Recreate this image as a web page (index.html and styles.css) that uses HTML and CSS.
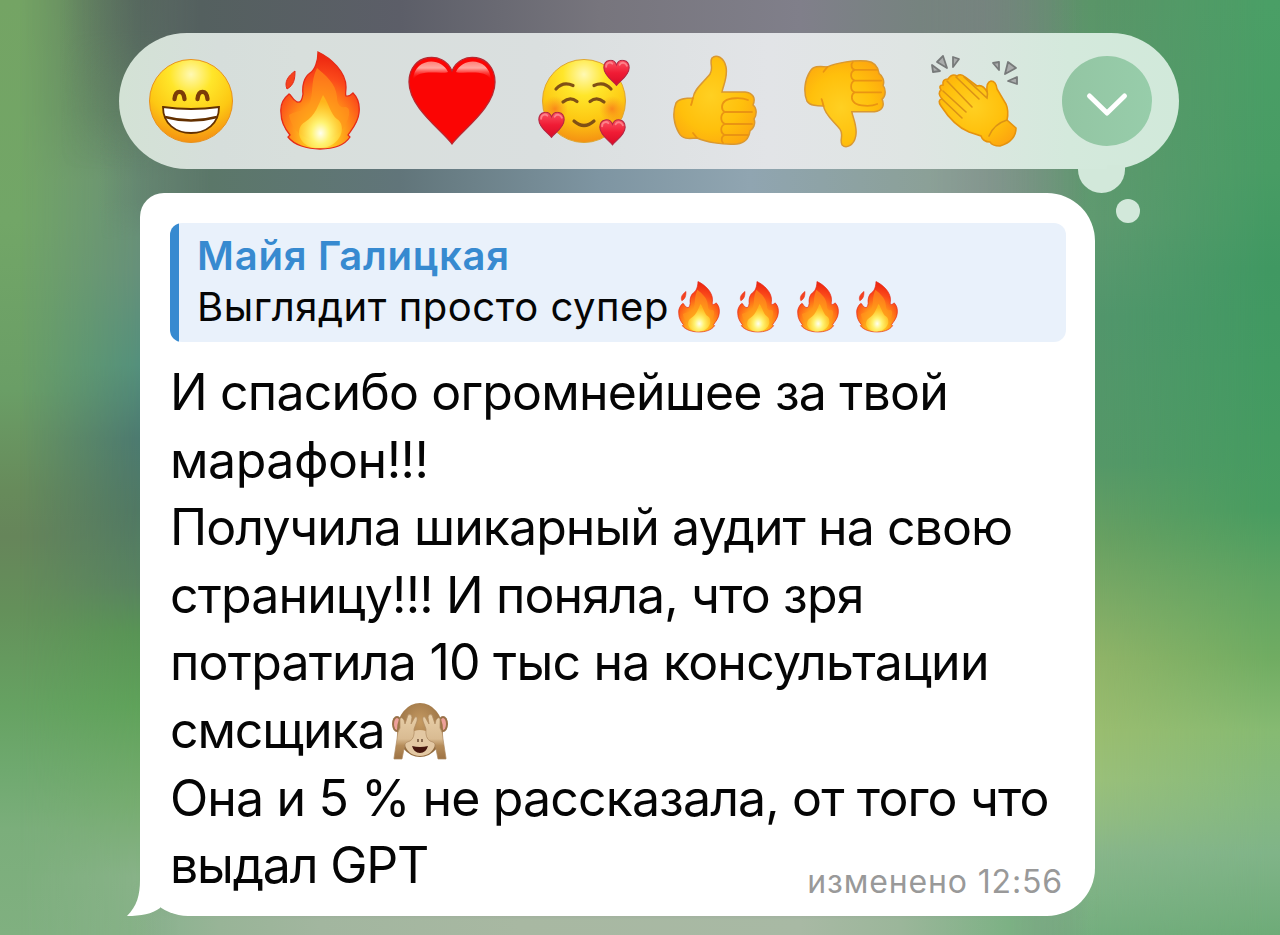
FILE: index.html
```html
<!DOCTYPE html>
<html lang="ru">
<head>
<meta charset="utf-8">
<title>Сообщение</title>
<link rel="stylesheet" href="styles.css">
</head>
<body>
<svg class="defs" aria-hidden="true">
  <defs>
    <radialGradient id="face" cx=".5" cy=".18" r=".85"><stop offset="0" stop-color="#fff9b4"/><stop offset=".3" stop-color="#ffe62a"/><stop offset=".65" stop-color="#fdc813"/><stop offset="1" stop-color="#f48a12"/></radialGradient>
    <radialGradient id="flame" cx=".5" cy=".86" r=".8"><stop offset="0" stop-color="#fff7a0"/><stop offset=".25" stop-color="#ffc21c"/><stop offset=".5" stop-color="#ff8518"/><stop offset=".75" stop-color="#fb4a1a"/><stop offset="1" stop-color="#ee2a12"/></radialGradient>
    <radialGradient id="core" cx=".5" cy=".72" r=".6"><stop offset="0" stop-color="#fffff0"/><stop offset=".35" stop-color="#fff372"/><stop offset="1" stop-color="#ffc81c" stop-opacity=".6"/></radialGradient>
    <linearGradient id="shine" x1="0" y1="0" x2="0" y2="1"><stop offset="0" stop-color="#ff8078"/><stop offset=".35" stop-color="#ffa8a0"/><stop offset="1" stop-color="#ff0a0a" stop-opacity="0"/></linearGradient>
    <linearGradient id="smallHeart" x1="0" y1="0" x2="0" y2="1"><stop offset="0" stop-color="#fb5262"/><stop offset=".5" stop-color="#f01c35"/><stop offset="1" stop-color="#d90b28"/></linearGradient>
    <radialGradient id="blush"><stop offset="0" stop-color="#f8641e" stop-opacity=".65"/><stop offset="1" stop-color="#f8841e" stop-opacity="0"/></radialGradient>
    <radialGradient id="hand" cx=".45" cy=".45" r=".65"><stop offset="0" stop-color="#ffd022"/><stop offset=".6" stop-color="#ffc00c"/><stop offset="1" stop-color="#fda60f"/></radialGradient>
    <radialGradient id="fur" cx=".5" cy=".35" r=".65"><stop offset="0" stop-color="#c59a62"/><stop offset="1" stop-color="#8f683c"/></radialGradient>
    <linearGradient id="paw" x1="0" y1="0" x2="0" y2="1"><stop offset="0" stop-color="#e8cfa8"/><stop offset=".55" stop-color="#d9bb92"/><stop offset=".7" stop-color="#b68d5a"/><stop offset="1" stop-color="#9d7243"/></linearGradient>
    <symbol id="heart" viewBox="0 0 26 26"><path d="M13 25C10 21 .8 15.500 .8 8C.8 -.5 10.500 -1.500 13 5.200C15.500 -1.500 25.200 -.5 25.200 8C25.200 15.500 16 21 13 25Z" fill="url(#smallHeart)" stroke="#b32743"/><path d="M3 7C3 3 7 2 9 4M16 5C18 2 22 3 23 6" fill="none" stroke="#ff9aa0" stroke-width="1.800" stroke-linecap="round" opacity=".7"/></symbol>
    <symbol id="fire" viewBox="0 0 80 100"><path d="M38 1C51 7 66 21 66 36C66 40 65 43 66 45C69 46 72 43 73 42C78 47 80 54 79 62C78 72 72 78 68 84L70 86C64 95 51 98 40 98C27 98 14 94 8 86L10 84C5 78 1 71 1 62C0 54 4 47 9 43C11 43 12 49 17 51C21 52 22 49 23 43C22 35 24 26 30 22C35 19 38 10 38 1Z" fill="url(#flame)" stroke="#e52a17" stroke-width="1.300"/><path d="M37 17C45 24 56 32 57 46C57 52 59 57 65 56C68 56 70 58 69 64C67 76 55 90 40 90C23 90 11 77 9 64C14 60 25 61 29 53C34 44 30 31 37 17Z" fill="#ff981b" opacity=".6"/><path d="M43 44C49 53 51 64 57 68C67 74 62 96 40 97C18 98 14 77 25 71C36 64 38 54 43 44Z" fill="url(#core)"/><path d="M15 20C8 25 4 31 7 38C14 34 15 28 15 20Z" fill="#f5431e" stroke="#e52a17"/></symbol>
    <symbol id="thumb" viewBox="0 0 84 92"><path d="M39 3C43 -1 51 2 53 12C55 22 50 31 49 37L72 37C80 38 83 43 80 50C84 53 84 60 81 64C83 69 80 74 77 76C76 83 73 88 64 89C49 90 33 87 24 83C15 84 9 84 6 78C1 70 -1 58 3 48C6 43 14 43 20 43C21 34 31 27 37 19C41 13 36 8 39 3Z" fill="url(#hand)" stroke="#d99832" stroke-width="1.500"/><path d="M75 45C68 42 56 43 52 46C48 49 48 55 52 57H79M52 57C47 59 47 67 52 69H79M52 69C47 71 47 78 52 80H75M52 80C48 81 48 86 50 88M20 43C19 46 19 48 18 50M20 78L24 83" fill="none" stroke="#ea9412" stroke-width="1.800" stroke-linecap="round"/></symbol>
  </defs>
</svg>
<main class="stage">
  <div class="backdrop" aria-hidden="true"><i class="wash inner-left"></i><i class="wash middle"></i><i class="wash right-near"></i><i class="wash right-far"></i><i class="wash upper"></i><i class="wash gap"></i><i class="wash lower"></i></div>
  <div class="reactions">
    <svg class="emoji" viewBox="0 0 92 100"><circle cx="46" cy="50" r="41.500" fill="url(#face)" stroke="#e9921b"/><path d="M29.500 48C30.500 38.500 38.500 38.500 39.500 48M52.500 48C53.500 38.500 61.500 38.500 62.500 48" fill="none" stroke="#7c3d08" stroke-width="4.300" stroke-linecap="round"/><path d="M18 56Q46 60 74 56C74 73 61 82 46 82C31 82 18 73 18 56Z" fill="#fff" stroke="#633000" stroke-width="1.800"/><path d="M20 66Q46 73 72 66" fill="none" stroke="#633000" stroke-width="2.600"/></svg>
    <svg class="emoji" viewBox="-4 0 92 100"><use href="#fire" width="80" height="100"/></svg>
    <svg class="emoji" viewBox="1 0 92 100"><path d="M46 93C37 80 3 57 3 31C3 2 38 -1 46 20C54 -1 89 2 89 31C89 57 55 80 46 93Z" fill="#fb0504" stroke="#b92831" stroke-width="1.300"/><path d="M7 29C8 7 35 5 42 21C34 24 13 17 7 29ZM50 21C57 5 84 7 85 29C79 17 58 24 50 21Z" fill="url(#shine)"/></svg>
    <svg class="emoji" viewBox="0 0 92 100"><circle cx="46" cy="50" r="41.500" fill="url(#face)" stroke="#dfa62f"/><circle cx="17" cy="58" r="13" fill="url(#blush)"/><circle cx="74" cy="58" r="13" fill="url(#blush)"/><path d="M18 38Q25 30 35 34.500M56 34.500Q66 30 73 38M25 51Q32 45 39 50.500M52 50.500Q59 45 66 51M36 70Q46 79 56 70" fill="none" stroke="#805015" stroke-width="3.200" stroke-linecap="round"/><use href="#heart" x="65" y="8.500" width="27" height="27"/><use href="#heart" x="0" y="60.500" width="27" height="27"/><use href="#heart" x="61" y="68" width="27" height="27"/></svg>
    <svg class="emoji" viewBox="0 0 92 100"><use href="#thumb" x="4" y="4" width="84" height="92"/></svg>
    <svg class="emoji" viewBox="0 0 92 100"><g transform="matrix(1 0 0 -1 0 101)"><use href="#thumb" x="4" y="4" width="82" height="90"/></g></svg>
    <svg class="emoji" viewBox="1 0 92 100"><g fill="#aaacac" stroke="#777a7a" stroke-width="1.800" stroke-linejoin="round"><path d="M2 14L3 21L10 20ZM7 11L13 5L17 17ZM23 6L29 8L23 16ZM63 12L69 11V19ZM78 11L86 17L75 23ZM78 30L87 26V33Z"/></g><path d="M13 34Q12 28 18 28Q22 22 27 25Q31 22 35 26L47 35Q53 33 57 41Q56 31 61 30Q66 30 67 38L76 53Q79 60 77 69L86 77Q86 90 70 95Q62 95 60 91Q53 91 51 85L39 81Q24 75 11 55Q7 49 12 48Q7 42 11 39Q8 34 13 34Z" fill="url(#hand)" stroke="#e5930f" stroke-width="1.600"/><path d="M17 30L42 56M26 26L49 48M34 26L57 47Q58 43 57 40M13 40L36 61M12 48L32 67M77 69Q64 73 59 85" fill="none" stroke="#db9216" stroke-width="1.600" stroke-linecap="round"/></svg>
    <button class="more" aria-label="Ещё"><svg viewBox="0 0 90 90"><path d="M27.500 40L45 57L62.500 40"/></svg></button>
    <span class="dot-large"></span><span class="dot-small"></span>
  </div>
  <article class="bubble">
    <div class="quote">
      <div class="author">Майя Галицкая</div>
      <div class="quoted"><span>Выглядит просто супер</span><svg class="fire-small"><use href="#fire"/></svg><svg class="fire-small"><use href="#fire"/></svg><svg class="fire-small"><use href="#fire"/></svg><svg class="fire-small"><use href="#fire"/></svg></div>
    </div>
    <div class="message">
      <div class="line l1"><span>И спасибо огромнейшее за твой</span></div>
      <div class="line l2"><span>марафон!!!</span></div>
      <div class="line l3"><span>Получила шикарный аудит на свою</span></div>
      <div class="line l4"><span>страницу!!! И поняла, что зря</span></div>
      <div class="line l5"><span>потратила 10 тыс на консультации</span></div>
      <div class="line l6"><span>смсщика</span><svg class="monkey" viewBox="0 0 56 58"><ellipse cx="5" cy="22" rx="5" ry="8" fill="#987047"/><ellipse cx="51" cy="22" rx="5" ry="8" fill="#987047"/><ellipse cx="5" cy="22" rx="3" ry="6" fill="#eea09a"/><ellipse cx="51" cy="22" rx="3" ry="6" fill="#eea09a"/><ellipse cx="28" cy="28" rx="23" ry="27" fill="url(#fur)"/><ellipse cx="28" cy="41" rx="15" ry="13" fill="#e3c8a3"/><path d="M20 44Q28 46 36 44Q34 51 28 51Q22 51 20 44Z" fill="#45150d"/><path d="M26 37v3M30 37v3" stroke="#6c4b34" stroke-width="1.500"/><path id="paw-shape" d="M2 56L5 37Q5 30 8 26L8 17Q9 14 12 18L13 22L16 13Q19 11 20 15L19 22L23 15Q26 14 25 19L22 27Q23 36 18 39Q14 40 13 42L10 57H2Z" fill="url(#paw)" stroke="#ae8a61" stroke-width=".7"/><use href="#paw-shape" transform="matrix(-1 0 0 1 56 0)"/></svg></div>
      <div class="line l7"><span>Она и 5 % не рассказала, от того что</span></div>
      <div class="line l8"><span>выдал GPT</span><span class="meta">изменено 12:56</span></div>
    </div>
    <svg class="tail" viewBox="0 0 62 60"><path d="M13 0V24C13 39 10 50 0 60C14 60 25 58 33 52L43 20V0Z" fill="#fff"/></svg>
  </article>
</main>
</body>
</html>
```
FILE: styles.css
```css
* { box-sizing: border-box; }
body { margin: 0; font-family: Inter, "Liberation Sans", sans-serif; color: #050505; }
.defs { position: absolute; width: 0; height: 0; }
.stage {
  position: relative; z-index: 0;
  width: 1280px; height: 935px; overflow: hidden; padding: 33px 101px 0 119px;
  display: flex; flex-direction: column; gap: 24px;
}

/* Blurred wallpaper, built from overlapping colour washes */
.backdrop {
  position: absolute; inset: 0; z-index: -1;
  background: linear-gradient(180deg, #74a464 0, #72a667 220px, #6a9e66 390px, #678b5b 490px, #66855a 536px, #64905a 609px, #66a262 707px, #6fa96f 770px, #7bae7b 829px, #80b080 935px);
}
.wash { position: absolute; inset: 0; }
.inner-left {
  background: linear-gradient(180deg, #5b735f 0, #5f7e66 110px, #6b9075 180px, #66907a 268px, #54907c 365px, #4c7a70 438px, #507864 511px, #588260 585px, #589455 633px, #5fa25a 707px, #76ac70 804px, #88b288 877px, #86b187 935px);
  mask-image: linear-gradient(90deg, transparent 20px, #000 140px);
}
.middle {
  background: #77857f;
  mask-image: linear-gradient(90deg, transparent 140px, #000 300px);
}
.right-near {
  background: linear-gradient(180deg, #5a9568 0, #5f9a70 219px, #52966c 316px, #559868 463px, #68a062 536px, #80ac66 609px, #90b468 658px, #9abd70 731px, #9ac07a 780px, #92bc82 819px, #88b68a 853px, #7cb284 902px, #74ae7e 935px);
  mask-image: linear-gradient(90deg, transparent 980px, #000 1090px);
}
.right-far {
  background: linear-gradient(180deg, #4a9f66 0, #489c64 170px, #409862 268px, #429a62 365px, #489c60 511px, #60a462 585px, #70ac62 658px, #86ba72 731px, #84b880 804px, #80b488 853px, #6eab78 935px);
  mask-image: linear-gradient(90deg, transparent 1095px, #000 1270px);
}
.upper {
  background: linear-gradient(90deg, rgba(98,133,95,0) 60px, #54605f 200px, #5c5e68 400px, #77757d 600px, #807f8a 800px, #76837f 920px, rgba(90,149,103,0) 1080px);
  mask-image: linear-gradient(180deg, #000 30px, transparent 170px);
}
.gap {
  top: 110px; height: 130px;
  background: linear-gradient(90deg, rgba(90,115,100,0) 100px, #5b7769 210px, #61757a 400px, #7e95a2 600px, #90a5b1 750px, #8ba097 930px, rgba(88,148,100,0) 1085px);
  mask-image: linear-gradient(180deg, transparent, #000 60px, #000 90px, transparent);
}
.lower {
  top: 880px;
  background: linear-gradient(90deg, rgba(134,177,135,0) 130px, #98b497 220px, #a2b69f 320px, #a8b8a2 520px, #a8b9a4 800px, #9bb69a 900px, rgba(124,178,132,0) 1010px, rgba(124,178,132,0)), linear-gradient(90deg, transparent 140px, #84b28b 180px, #7cb184 1010px, transparent 1100px);
  mask-image: linear-gradient(180deg, transparent, #000 40px);
}

.reactions {
  position: relative; width: 1060px; height: 136px; flex: none; border-radius: 68px;
  padding: 0 27px 0 26px; display: flex; align-items: center; justify-content: space-between;
  background: linear-gradient(90deg, #d3e2d5 0, #d6dedb 100px, #d8dfdc 180px, #dadfdf 420px, #e2e4e7 650px, #dfe5e3 790px, #d4e9dc 950px, #d1e9da 100%);
}
.emoji { width: 92px; height: 100px; flex: none; }
.more { width: 90px; height: 90px; border: 0; border-radius: 50%; padding: 0; background: linear-gradient(90deg, #93c5a3, #97cdaa); flex: none; }
.more svg { display: block; width: 90px; height: 90px; }
.more path { fill: none; stroke: #fff; stroke-width: 5; stroke-linecap: round; stroke-linejoin: round; }
.dot-large { position: absolute; left: 959px; top: 136px; width: 47px; height: 24px; border-radius: 0 0 24px 24px; background: #d2e8da; }
.dot-large::before { content: ""; position: absolute; right: 0; bottom: 23px; width: 18px; height: 5px; background: #d2e8da; }
.dot-small { position: absolute; left: 997px; top: 166px; width: 24px; height: 24px; border-radius: 50%; background: #d2e8da; }

.bubble { position: relative; width: 955px; height: 723px; flex: none; margin-left: 21px; padding: 30px 29px 0 30px; border-radius: 24px 48px 48px 48px; background: #fff; }
.quote { height: 119px; border-radius: 12px; padding: 8px 0 0 27px; background: linear-gradient(90deg, #378ad0 9px, #e9f1fb 9px); white-space: nowrap; }
.author { color: #378ad0; font-size: 40px; font-weight: 600; line-height: 50px; letter-spacing: .77px; }
.quoted { display: flex; align-items: center; font-size: 40px; line-height: 50px; letter-spacing: .53px; }
.fire-small { width: 42px; height: 52px; margin-left: 9px; margin-right: 8.500px; flex: none; }
.message { font-size: 50px; line-height: 67.600px; padding-top: 17px; }
.line { display: flex; height: 67.600px; white-space: nowrap; align-items: center; }
.l1 { letter-spacing: -.82px; }
.l2 { letter-spacing: -.45px; }
.l3 { letter-spacing: -.93px; }
.l4 { letter-spacing: -.85px; }
.l5 { letter-spacing: -.77px; }
.l6 { letter-spacing: -1.100px; }
.l7 { letter-spacing: -.86px; }
.l8 { letter-spacing: -1.200px; }
.monkey { width: 56px; height: 58px; margin-left: 7px; }
.meta { margin-left: auto; padding: 33px 3px 0 0; font-size: 32px; line-height: 34px; letter-spacing: .85px; color: #999; }
.tail { position: absolute; left: -13px; bottom: 0; width: 62px; height: 60px; }
```
